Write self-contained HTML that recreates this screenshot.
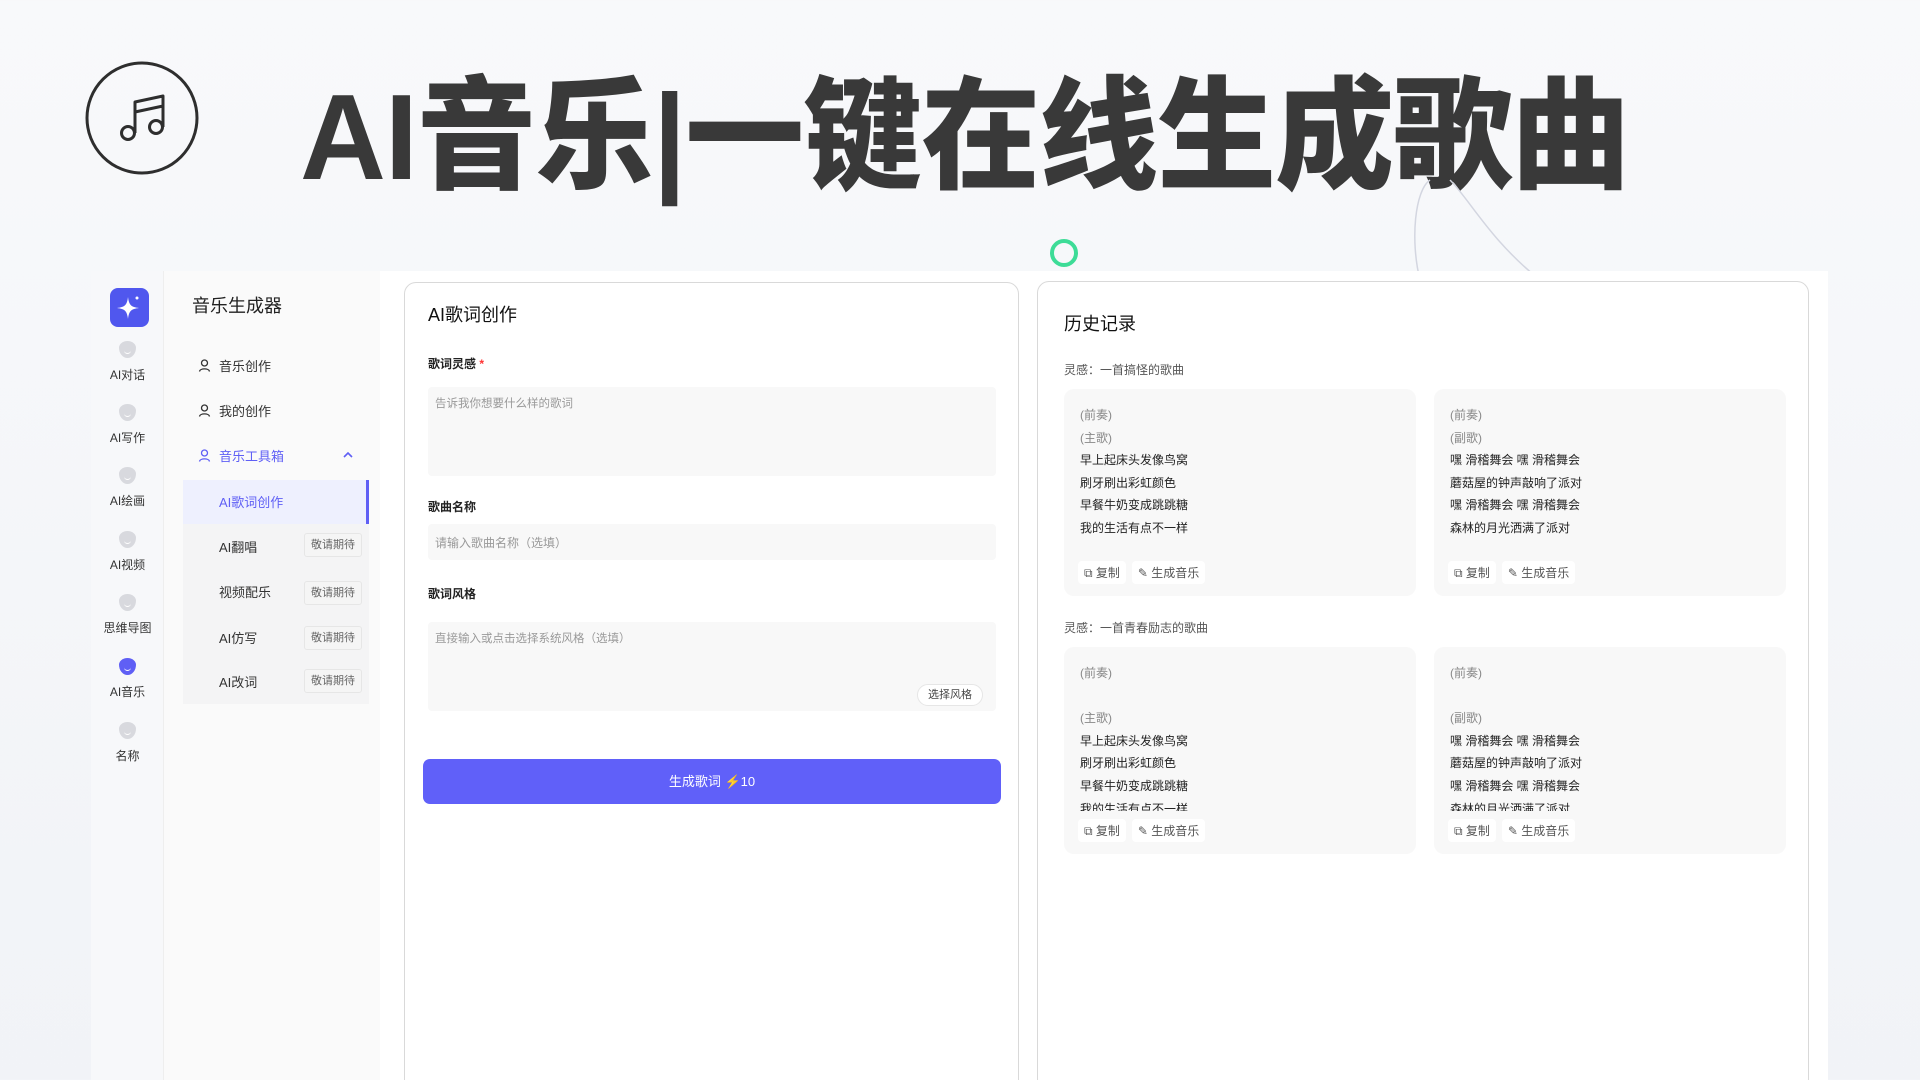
<!DOCTYPE html>
<html><head><meta charset="utf-8"><style>
*{margin:0;padding:0;box-sizing:border-box}
html{width:1920px;height:1080px;overflow:hidden}
body{width:1920px;height:1080px;overflow:hidden;background:linear-gradient(180deg,#f8f9fb,#f1f3f7);font-family:"Liberation Sans","Noto Sans CJK SC",sans-serif;position:relative;color:#222}
.abs{position:absolute}
.title{left:300px;top:62px;font-size:122px;font-weight:900;color:#393939;letter-spacing:-1px;line-height:150px;white-space:nowrap;transform:scaleX(0.975);transform-origin:left}
.panel{left:91px;top:271px;width:1737px;height:809px;background:#fff}
.icol{left:91px;top:271px;width:73px;height:809px;background:#f7f8fa;border-right:1px solid #eee}
.scol{left:164px;top:271px;width:216px;height:809px;background:#fafafa}
.ic{position:absolute;width:73px;text-align:center;font-size:12px;color:#333}
.ic i{display:block;width:17px;height:17px;border-radius:50% 50% 50% 50%/40% 40% 60% 60%;background:#d8d9de;margin:0 auto 8px;position:relative}
.ic i:after{content:"";position:absolute;left:5px;top:9px;width:7px;height:3px;border-bottom:1.5px solid #fff;border-radius:0 0 4px 4px}
.mi{position:absolute;left:198px;font-size:13px;color:#333;display:flex;align-items:center;gap:8px}
.sub{left:183px;top:480px;width:186px;height:224px;background:#f4f4f5}
.si{position:absolute;left:219px;font-size:13px;color:#333}
.badge{position:absolute;left:304px;width:58px;height:24px;border:1px solid #e6e6e6;background:#f5f5f5;border-radius:3px;font-size:11px;color:#666;text-align:center;line-height:22px}
.card{border:1px solid #d9d9d9;border-radius:12px;background:#fff}
.lbl{position:absolute;left:428px;font-size:12px;font-weight:bold;color:#222}
.fld{position:absolute;left:428px;width:568px;background:#f8f8f8;border-radius:4px;font-size:12px;color:#999;padding:8px 7px}
.h{position:absolute;font-size:12px;color:#555}
.lc{position:absolute;width:352px;height:207px;background:#f8f8f8;border-radius:10px}
.ln{position:absolute;left:16px;font-size:12px;color:#222;line-height:22.6px}
.ln .g{color:#888}
.btns{position:absolute;left:14px;display:flex;gap:6px;font-size:12px;color:#555}
.btns span{background:#fff;border-radius:4px;padding:3px 6px;display:flex;align-items:center;gap:3px}
</style></head><body>
<svg class="abs" style="left:80px;top:56px" width="124" height="124" viewBox="0 0 124 124">
<circle cx="62" cy="62" r="55" fill="none" stroke="#2e2e2e" stroke-width="3"/>
<circle cx="48" cy="77" r="6.5" fill="none" stroke="#2e2e2e" stroke-width="3"/>
<circle cx="76" cy="71" r="6.5" fill="none" stroke="#2e2e2e" stroke-width="3"/>
<path d="M55 77V46L83 40V71M55 56L83 50" fill="none" stroke="#2e2e2e" stroke-width="3" stroke-linejoin="round"/>
</svg>
<div class="abs title">AI音乐|一键在线生成歌曲</div>
<svg class="abs" style="left:1400px;top:170px" width="160" height="110"><path d="M20 110C10 70 15 20 30 10M50 10C70 30 90 70 140 110" fill="none" stroke="#d3d6e0" stroke-width="1.5"/></svg>
<div class="abs" style="left:1050px;top:239px;width:28px;height:28px;border-radius:50%;border:4.5px solid #3ddc97"></div>
<div class="abs panel"></div>
<div class="abs icol"></div>
<div class="abs scol"></div>
<div class="abs" style="left:110px;top:288px;width:39px;height:39px;border-radius:8px;background:#5057ee">
<svg width="39" height="39" viewBox="0 0 39 39"><path d="M18 9C19 17 21 19 29 20C21 21 19 23 18 31C17 23 15 21 7 20C15 19 17 17 18 9Z" fill="#fff"/><circle cx="27" cy="10" r="1.5" fill="#fff"/></svg></div>
<div class="ic" style="left:91px;top:341px"><i></i>AI对话</div>
<div class="ic" style="left:91px;top:404px"><i></i>AI写作</div>
<div class="ic" style="left:91px;top:467px"><i></i>AI绘画</div>
<div class="ic" style="left:91px;top:531px"><i></i>AI视频</div>
<div class="ic" style="left:91px;top:594px"><i></i>思维导图</div>
<div class="ic" style="left:91px;top:658px"><i style="background:#5f5ff5"></i>AI音乐</div>
<div class="ic" style="left:91px;top:722px"><i></i>名称</div>
<div class="abs" style="left:192px;top:292px;font-size:18px;color:#222">音乐生成器</div>
<div class="mi" style="top:356px"><svg width="13" height="13" viewBox="0 0 13 13" fill="none" stroke="#333" stroke-width="1.3"><circle cx="6.5" cy="4" r="3"/><path d="M1.5 12.5C2 9 11 9 11.5 12.5"/></svg>音乐创作</div>
<div class="mi" style="top:401px"><svg width="13" height="13" viewBox="0 0 13 13" fill="none" stroke="#333" stroke-width="1.3"><circle cx="6.5" cy="4" r="3"/><path d="M1.5 12.5C2 9 11 9 11.5 12.5"/></svg>我的创作</div>
<div class="mi" style="top:446px;color:#5f5ff5"><svg width="13" height="13" viewBox="0 0 13 13" fill="none" stroke="#5f5ff5" stroke-width="1.3"><circle cx="6.5" cy="4" r="3"/><path d="M1.5 12.5C2 9 11 9 11.5 12.5"/></svg>音乐工具箱</div>
<svg class="abs" style="left:343px;top:451px" width="10" height="7"><path d="M1 6L5 2L9 6" fill="none" stroke="#5f5ff5" stroke-width="1.6"/></svg>
<div class="abs sub"></div>
<div class="abs" style="left:183px;top:480px;width:186px;height:44px;background:#eef0fe;border-right:3px solid #5f5ff5"></div>
<div class="si" style="top:492px;color:#5f5ff5">AI歌词创作</div>
<div class="si" style="top:537px">AI翻唱</div><div class="badge" style="top:533px">敬请期待</div>
<div class="si" style="top:582px">视频配乐</div><div class="badge" style="top:581px">敬请期待</div>
<div class="si" style="top:628px">AI仿写</div><div class="badge" style="top:626px">敬请期待</div>
<div class="si" style="top:672px">AI改词</div><div class="badge" style="top:669px">敬请期待</div>

<div class="abs card" style="left:404px;top:282px;width:615px;height:810px"></div>
<div class="abs" style="left:428px;top:301px;font-size:18px;color:#111">AI歌词创作</div>
<div class="lbl" style="top:355px">歌词灵感 <span style="color:#f33">*</span></div>
<div class="fld" style="top:387px;height:89px;font-size:11.5px">告诉我你想要什么样的歌词</div>
<div class="lbl" style="top:498px">歌曲名称</div>
<div class="fld" style="top:524px;height:36px;padding-top:10px">请输入歌曲名称（选填）</div>
<div class="lbl" style="top:585px">歌词风格</div>
<div class="fld" style="top:622px;height:89px;font-size:11.5px">直接输入或点击选择系统风格（选填）</div>
<div class="abs" style="left:917px;top:684px;width:66px;height:22px;border:1px solid #e6e6e6;border-radius:11px;background:#fff;font-size:11px;color:#444;text-align:center;line-height:20px">选择风格</div>
<div class="abs" style="left:423px;top:759px;width:578px;height:45px;border-radius:7px;background:#6060f9;color:#fff;font-size:13px;text-align:center;line-height:45px">生成歌词 <span style="color:#f7c948">⚡</span>10</div>

<div class="abs card" style="left:1037px;top:281px;width:772px;height:810px"></div>
<div class="abs" style="left:1064px;top:310px;font-size:18px;color:#111">历史记录</div>
<div class="h" style="left:1064px;top:361px">灵感：一首搞怪的歌曲</div>
<div class="h" style="left:1064px;top:619px">灵感：一首青春励志的歌曲</div>

<div class="lc" style="left:1064px;top:389px">
<div class="ln" style="top:15px"><span class="g">(前奏)<br>(主歌)</span><br>早上起床头发像鸟窝<br>刷牙刷出彩虹颜色<br>早餐牛奶变成跳跳糖<br>我的生活有点不一样</div>
<div class="btns" style="top:172px"><span>⧉ 复制</span><span>✎ 生成音乐</span></div></div>
<div class="lc" style="left:1434px;top:389px">
<div class="ln" style="top:15px"><span class="g">(前奏)<br>(副歌)</span><br>嘿 滑稽舞会 嘿 滑稽舞会<br>蘑菇屋的钟声敲响了派对<br>嘿 滑稽舞会 嘿 滑稽舞会<br>森林的月光洒满了派对</div>
<div class="btns" style="top:172px"><span>⧉ 复制</span><span>✎ 生成音乐</span></div></div>
<div class="lc" style="left:1064px;top:647px;overflow:hidden">
<div style="position:absolute;left:0;top:0;width:352px;height:164px;overflow:hidden"><div class="ln" style="top:15px"><span class="g">(前奏)<br><br>(主歌)</span><br>早上起床头发像鸟窝<br>刷牙刷出彩虹颜色<br>早餐牛奶变成跳跳糖<br>我的生活有点不一样</div></div>
<div class="btns" style="top:172px"><span>⧉ 复制</span><span>✎ 生成音乐</span></div></div>
<div class="lc" style="left:1434px;top:647px;overflow:hidden">
<div style="position:absolute;left:0;top:0;width:352px;height:164px;overflow:hidden"><div class="ln" style="top:15px"><span class="g">(前奏)<br><br>(副歌)</span><br>嘿 滑稽舞会 嘿 滑稽舞会<br>蘑菇屋的钟声敲响了派对<br>嘿 滑稽舞会 嘿 滑稽舞会<br>森林的月光洒满了派对</div></div>
<div class="btns" style="top:172px"><span>⧉ 复制</span><span>✎ 生成音乐</span></div></div>
</body></html>
